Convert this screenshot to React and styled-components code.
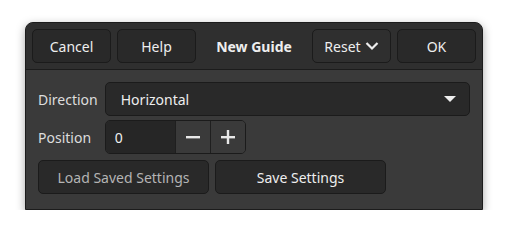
import React from "react";
import styled, { createGlobalStyle } from "styled-components";

const GlobalStyle = createGlobalStyle`
  html, body {
    margin: 0;
    padding: 0;
    background: #ffffff;
    font-family: "Noto Sans", "Open Sans", sans-serif;
  }
`;

const Page = styled.div`
  padding: 22px 0 0 25px;
`;

const Dialog = styled.div`
  width: 458px;
  box-sizing: border-box;
  background: #3a3a3a;
  border: 1px solid #1c1c1c;
  border-radius: 8px 8px 0 0;
  box-shadow: 0 3px 10px rgba(0, 0, 0, 0.35);
  overflow: hidden;
`;

const HeaderBar = styled.div`
  display: flex;
  align-items: center;
  gap: 6px;
  height: 46px;
  padding: 0 6px;
  background: #2f2f2f;
  border-bottom: 1px solid #1c1c1c;
`;

const Button = styled.button`
  display: flex;
  align-items: center;
  justify-content: center;
  gap: 4px;
  width: ${(p) => p.$width || 79}px;
  height: 34px;
  padding: 0;
  box-sizing: border-box;
  background: ${(p) => (p.$flat ? "#2f2f2f" : "#292929")};
  border: 1px solid #1b1b1b;
  border-radius: 5px;
  color: ${(p) => (p.$dim ? "#b4b4b4" : "#eeeeee")};
  font-family: inherit;
  font-size: 14px;
`;

const Title = styled.div`
  flex: 1;
  text-align: center;
  color: #eeeeee;
  font-size: 14px;
  font-weight: 700;
`;

const Body = styled.div`
  padding: 12px 12px 15px 12px;
  display: flex;
  flex-direction: column;
`;

const FieldGrid = styled.div`
  display: grid;
  grid-template-columns: auto 1fr;
  column-gap: 7px;
  row-gap: 4px;
  align-items: center;
`;

const Label = styled.div`
  color: #dddddd;
  font-size: 14px;
`;

const Combo = styled.div`
  display: flex;
  align-items: center;
  justify-content: space-between;
  height: 34px;
  box-sizing: border-box;
  padding: 0 13px 0 15px;
  background: #292929;
  border: 1px solid #1b1b1b;
  border-radius: 5px;
  color: #eeeeee;
  font-size: 14px;
`;

const Spin = styled.div`
  display: flex;
  width: 141px;
  height: 34px;
  box-sizing: border-box;
  border: 1px solid #1b1b1b;
  border-radius: 5px;
  overflow: hidden;
`;

const SpinEntry = styled.div`
  flex: 1;
  display: flex;
  align-items: center;
  padding-left: 9px;
  background: #262626;
  color: #eeeeee;
  font-size: 14px;
`;

const SpinButton = styled.div`
  width: 34px;
  display: flex;
  align-items: center;
  justify-content: center;
  background: #3a3a3a;
  border-left: 1px solid #1f1f1f;
`;

const ButtonRow = styled.div`
  display: flex;
  gap: 6px;
  margin-top: 6px;
`;

const Triangle = () => (
  <svg width="12" height="6" viewBox="0 0 12 6">
    <path d="M0 0 L12 0 L6 6 Z" fill="#eeeeee" />
  </svg>
);

const Chevron = () => (
  <svg width="14" height="10" viewBox="0 0 14 10">
    <path d="M1.5 2 L7 7.5 L12.5 2" fill="none" stroke="#eeeeee" strokeWidth="2.2" />
  </svg>
);

const Minus = () => (
  <svg width="14" height="14" viewBox="0 0 14 14">
    <rect x="0" y="6" width="14" height="2.4" fill="#e8e8e8" />
  </svg>
);

const Plus = () => (
  <svg width="14" height="14" viewBox="0 0 14 14">
    <rect x="0" y="6" width="14" height="2.4" fill="#e8e8e8" />
    <rect x="5.8" y="0" width="2.4" height="14" fill="#e8e8e8" />
  </svg>
);

export default function App() {
  return (
    <Page>
      <GlobalStyle />
      <Dialog>
        <HeaderBar>
          <Button>Cancel</Button>
          <Button>Help</Button>
          <Title>New Guide</Title>
          <Button $flat>
            Reset <Chevron />
          </Button>
          <Button>OK</Button>
        </HeaderBar>
        <Body>
          <FieldGrid>
            <Label>Direction</Label>
            <Combo>
              Horizontal
              <Triangle />
            </Combo>
            <Label>Position</Label>
            <Spin>
              <SpinEntry>0</SpinEntry>
              <SpinButton>
                <Minus />
              </SpinButton>
              <SpinButton>
                <Plus />
              </SpinButton>
            </Spin>
          </FieldGrid>
          <ButtonRow>
            <Button $width={171} $dim>
              Load Saved Settings
            </Button>
            <Button $width={171}>Save Settings</Button>
          </ButtonRow>
        </Body>
      </Dialog>
    </Page>
  );
}
